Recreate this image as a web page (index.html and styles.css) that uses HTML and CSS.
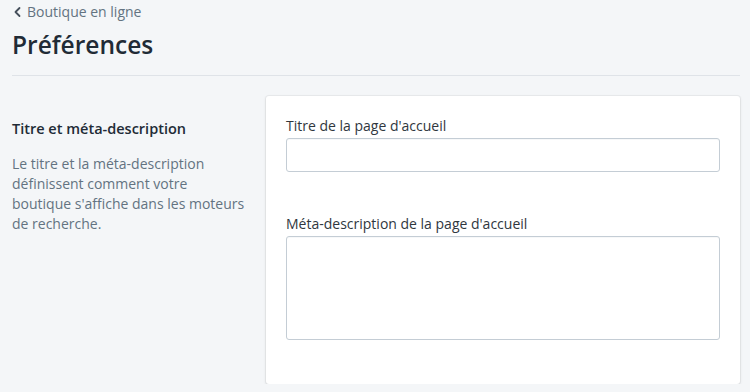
FILE: index.html
```html
<!DOCTYPE html>
<html lang="fr">
<head>
    <meta charset="UTF-8">
    <title>Préférences</title>
    <link rel="stylesheet" href="styles.css">
</head>
<body>
<div class="page">
    <div class="header">
        <a class="back" href="javascript:;">
            <svg width="12" height="12" viewBox="0 0 12 12"><path d="M7.5 2L3.5 6l4 4" fill="none" stroke="#454f5b" stroke-width="1.8" stroke-linecap="round" stroke-linejoin="round"/></svg>
            <span>Boutique en ligne</span>
        </a>
        <h1>Préférences</h1>
    </div>
    <div class="section">
        <div class="annotation">
            <h2>Titre et méta-description</h2>
            <p>Le titre et la méta-description définissent comment votre boutique s'affiche dans les moteurs de recherche.</p>
        </div>
        <div class="card">
            <label class="field">
                <span>Titre de la page d'accueil</span>
                <input type="text">
            </label>
            <label class="field">
                <span>Méta-description de la page d'accueil</span>
                <textarea></textarea>
            </label>
        </div>
    </div>
</div>
</body>
</html>
```

FILE: styles.css
```css
body,div,h1,h2,p{margin:0;padding:0;}
body{background:#f4f6f8;color:#212b36;font:14px/20px "Open Sans","Noto Sans",sans-serif;}
.page{padding:0 10px 0 12px;}
.header{padding-top:2px;border-bottom:1px solid #dfe3e8;padding-bottom:14px;}
.back{display:flex;align-items:center;gap:3px;color:#637381;text-decoration:none;font-size:14px;line-height:20px;}
.back svg{margin-top:-1px;}
.header h1{font-size:24.5px;line-height:32px;font-weight:600;margin-top:7px;}
.section{display:flex;gap:16px;margin-top:20px;}
.annotation{width:238px;padding-top:22px;}
.annotation h2{font-size:14.5px;line-height:22px;font-weight:600;}
.annotation p{color:#637381;margin-top:14px;}
.card{flex:1;background:#fff;border-radius:3px;box-shadow:0 0 0 1px rgba(63,63,68,.05),0 1px 3px rgba(63,63,68,.15);padding:20px 20px 44px;display:flex;flex-direction:column;gap:42px;}
.field{display:flex;flex-direction:column;color:#30373e;}
.field span{margin-bottom:2px;}
.field input,.field textarea{border:1px solid #c4cdd5;border-radius:3px;box-shadow:inset 0 1px 0 rgba(99,115,129,.05);font:inherit;margin:0;padding:6px 10px;outline:none;}
.field input{height:34px;box-sizing:border-box;}
.field textarea{height:104px;box-sizing:border-box;resize:none;}
```
